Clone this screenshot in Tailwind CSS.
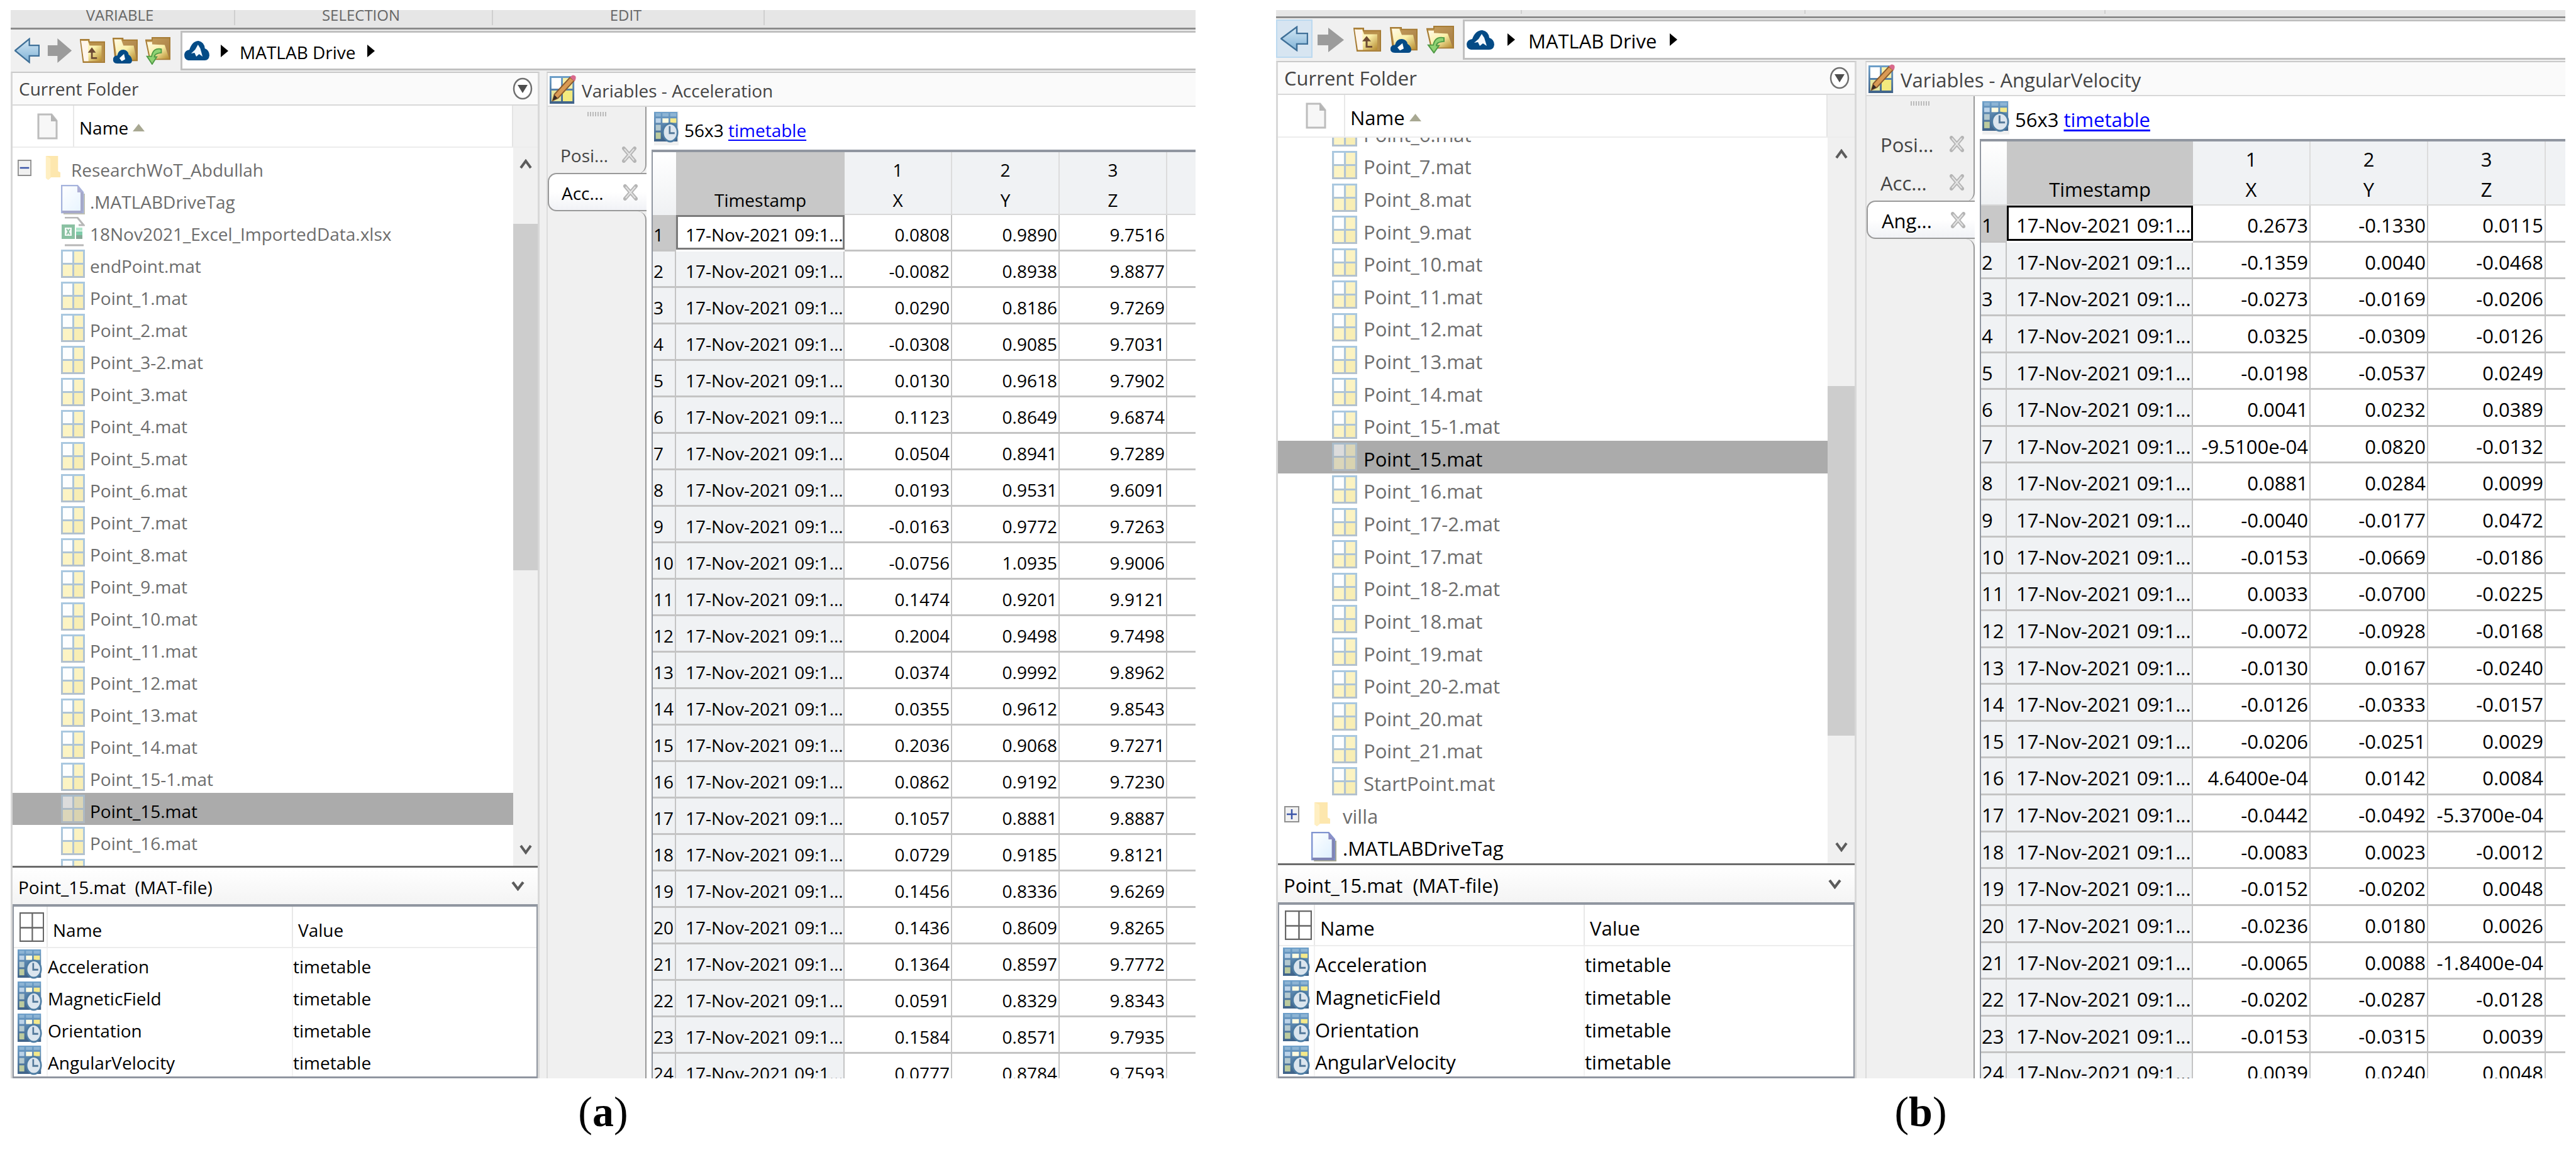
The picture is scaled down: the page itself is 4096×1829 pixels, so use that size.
<!DOCTYPE html>
<html lang="en">
<head>
<meta charset="utf-8">
<title>MATLAB Drive workspace</title>
<script src="https://cdn.jsdelivr.net/npm/@tailwindcss/browser@4"></script>
</head>
<body class="bg-white text-black">
<svg class="absolute h-0 w-0" aria-hidden="true">
  <defs>
    <linearGradient id="gBlue" x1="0" y1="0" x2="0" y2="1"><stop offset="0" stop-color="#d5e8f5"/><stop offset="1" stop-color="#7fb2d6"/></linearGradient>
    <linearGradient id="gTan" x1="0" y1="0" x2="1" y2="1"><stop offset="0" stop-color="#fffbe8"/><stop offset=".5" stop-color="#faf0a8"/><stop offset="1" stop-color="#b5892e"/></linearGradient>
    <linearGradient id="gBack" x1="0" y1="0" x2="1" y2="1"><stop offset="0" stop-color="#c8a15c"/><stop offset="1" stop-color="#a37a45"/></linearGradient>
    <linearGradient id="gPage" x1="0" y1="0" x2="1" y2="1"><stop offset="0" stop-color="#ffffff"/><stop offset="1" stop-color="#dcefff"/></linearGradient>
    <linearGradient id="gGrid" x1="0" y1="0" x2="0" y2="1"><stop offset="0" stop-color="#a9c8e0"/><stop offset="1" stop-color="#b3c1cd"/></linearGradient>
    <linearGradient id="gCal" x1="0" y1="0" x2="0" y2="1"><stop offset="0" stop-color="#6ea0ca"/><stop offset="1" stop-color="#3f6288"/></linearGradient>
  </defs>
  <symbol id="back" viewBox="0 0 44 44" preserveAspectRatio="none"><path d="M1 22 26 2V13H43V31H26V42Z" fill="url(#gBlue)" stroke="#3f7098" stroke-width="2.5"/></symbol>
  <symbol id="fwd" viewBox="0 0 44 44" preserveAspectRatio="none"><path d="M43 22 18 1V13H1V31H18V43Z" fill="#9b9b9b"/></symbol>
  <symbol id="up" viewBox="0 0 44 42" preserveAspectRatio="none"><path d="M1 2H16V6H43V40H6Z" fill="#b9914c" stroke="#a67c35" stroke-width="2"/><path d="M3 5 14 4 17 12H38V38L8 38Z" fill="url(#gTan)"/><path d="M2 4 14 5 15 38H7Z" fill="#fff6ec"/><path d="M30 33H21V20" fill="none" stroke="#6d4a33" stroke-width="3"/><path d="M21 15 28 24H14Z" fill="#6d4a33"/></symbol>
  <symbol id="cloudfolder" viewBox="0 0 44 43" preserveAspectRatio="none"><path d="M1 1H18V4H43V38H5Z" fill="url(#gBack)" stroke="#a67c35" stroke-width="2"/><path d="M3 3H15L19 13H37L42 37H8Z" fill="url(#gTan)"/><path d="M8 43Q0 43 1 35Q2 30 8 30Q10 20 19 20Q27 21 28 28Q34 32 34 38Q34 43 29 43Z" fill="#044b86"/><path d="M12 34 20 27 22 36 16 39Z" fill="#fff"/></symbol>
  <symbol id="refresh" viewBox="0 0 44 46" preserveAspectRatio="none"><path d="M1 5H12V1H43V37H8Z" fill="url(#gBack)" stroke="#a67c35" stroke-width="2"/><path d="M3 8H12V12L34 13 42 36H9Z" fill="url(#gTan)"/><path d="M28 20Q14 17 11 32H3L12 45 20 33H16Q16 27 28 26Z" fill="#8fd273" stroke="#4f9a45" stroke-width="2"/></symbol>
  <symbol id="cloud" viewBox="0 0 44 31" preserveAspectRatio="none"><path d="M7 31Q0 30 0 22Q1 15 9 14Q14 0 25 0Q35 2 36 12Q44 15 44 23Q43 31 36 31Z" fill="#044b86"/><path d="M12 20 19 14 24 6 28 12 32 25 26 21 21 25 18 19Z" fill="#f5faff"/></symbol>
  <symbol id="folder" viewBox="0 0 26 40" preserveAspectRatio="none"><path d="M1 1H22V26L26 28V36H10L5 40 1 37Z" fill="#fde7ae"/><path d="M1 1 9 5V37L5 40 1 37Z" fill="#ffefc2"/></symbol>
  <symbol id="page" viewBox="0 0 38 47" preserveAspectRatio="none"><path d="M4 14H38V47H4Z" fill="#a7a78f"/><path d="M1 1H26L35 12V44H1Z" fill="url(#gPage)" stroke="#7f93d0" stroke-width="2.5"/><path d="M33 12V42M2 43H34" stroke="#7f84b4" stroke-width="4"/><path d="M26 1V12H35Z" fill="#8e8fc4"/></symbol>
  <symbol id="xlsx" viewBox="0 0 38 47" preserveAspectRatio="none"><path d="M6 1H26L36 13H28M6 45H36" fill="none" stroke="#999" stroke-width="3"/><path d="M1 12H22V35H1Z" fill="#5aa87c"/><path d="M24 17H34V22H24Z" fill="#90ddb7"/><path d="M24 23H34V29H24Z" fill="#49b787"/><path d="M24 29H34V35H24Z" fill="#53856a"/><path d="M6 17H17V30H6Z" fill="#f3f8f5"/><path d="M9 19 14 28M14 19 9 28" stroke="#5aa87c" stroke-width="2"/></symbol>
  <symbol id="mat" viewBox="0 0 38 45" preserveAspectRatio="none"><path d="M0 0H38V45H0Z" fill="url(#gGrid)"/><path d="M3 3H18V21H3Z" fill="#fdfefe"/><path d="M21 3H35V21H21Z" fill="#fbf3c2"/><path d="M3 24H18V42H3Z" fill="#fcf4c4"/><path d="M21 24H35V42H21Z" fill="#f8eeb4"/></symbol>
  <symbol id="timetable" viewBox="0 0 44 48" preserveAspectRatio="none"><path d="M0 0H42V46H0Z" fill="url(#gCal)"/><path d="M3 2H12V7H3ZM15 2H26V7H15ZM29 2H40V7H29Z" fill="#8db4d4"/><path d="M3 10H12V17H3Z" fill="#bcd3e8"/><path d="M15 10H26V17H15Z" fill="#fffbe0"/><path d="M29 10H40V17H29Z" fill="#f4e98a"/><path d="M3 20H12V29H3Z" fill="#b4c9cf"/><path d="M3 32H12V42H3Z" fill="#bccb9e"/><ellipse cx="29" cy="32" rx="13" ry="14" fill="#dbe5ee" stroke="#4d7ca3" stroke-width="3"/><path d="M28 22V33H37" fill="none" stroke="#54799a" stroke-width="3"/></symbol>
  <symbol id="vars" viewBox="0 0 44 46" preserveAspectRatio="none"><path d="M0 2H41V46H0Z" fill="url(#gCal)"/><path d="M3 5H19V22H3Z" fill="#fff"/><path d="M22 5H38V22H22Z" fill="#f6f0a8"/><path d="M3 25H19V42H3Z" fill="#e5e69e"/><path d="M22 25H38V42H22Z" fill="#f3ea7e"/><path d="M5 41 8 31 34 4 41 9 14 37Z" fill="#d99a54" stroke="#8a5a2c" stroke-width="2"/><path d="M5 41 8 32 13 37Z" fill="#332a26"/><path d="M34 4Q38-2 43 2Q45 7 41 10Z" fill="#d9698c"/></symbol>
  <symbol id="blank" viewBox="0 0 33 42" preserveAspectRatio="none"><path d="M2 2H23L31 12V40H2Z" fill="#f7f7f7" stroke="#bdbdbd" stroke-width="3"/><path d="M22 1V13H32Z" fill="#b5b5b5"/></symbol>
  <symbol id="grid" viewBox="0 0 44 48" preserveAspectRatio="none"><path d="M1 1H43V47H1ZM23 1V47M1 25H43" fill="#fff" stroke="#666" stroke-width="2.5"/></symbol>
  <symbol id="minus" viewBox="0 0 24 26" preserveAspectRatio="none"><path d="M1 1H23V25H1Z" fill="#f1f1f1" stroke="#8f8f8f" stroke-width="2"/><path d="M4 13H20" stroke="#3b55a8" stroke-width="2.5"/></symbol>
  <symbol id="plus" viewBox="0 0 24 26" preserveAspectRatio="none"><path d="M1 1H23V25H1Z" fill="#f1f1f1" stroke="#8f8f8f" stroke-width="2"/><path d="M4 13H20M12 5V21" stroke="#3b55a8" stroke-width="2.5"/></symbol>
  <symbol id="menu" viewBox="0 0 32 36" preserveAspectRatio="none"><ellipse cx="16" cy="18" rx="14" ry="16" fill="#fff" stroke="#707070" stroke-width="2.5"/><path d="M8 12H24L16 25Z" fill="#4d4d4d"/></symbol>
  <symbol id="chevup" viewBox="0 0 20 16" preserveAspectRatio="none"><path d="M2 14 10 3 18 14" fill="none" stroke="#5c5c5c" stroke-width="4"/></symbol>
  <symbol id="chevdown" viewBox="0 0 20 16" preserveAspectRatio="none"><path d="M2 2 10 13 18 2" fill="none" stroke="#5c5c5c" stroke-width="4"/></symbol>
  <symbol id="tri" viewBox="0 0 12 20" preserveAspectRatio="none"><path d="M0 0 12 10 0 20Z" fill="#000"/></symbol>
  <symbol id="sort" viewBox="0 0 20 12" preserveAspectRatio="none"><path d="M0 12 10 0 20 12Z" fill="#a8a892"/></symbol>
  <symbol id="close" viewBox="0 0 24 26" preserveAspectRatio="none"><path d="M3 3 21 23M21 3 3 23" stroke="#b5b5b5" stroke-width="6" stroke-linecap="round"/><path d="M4 4 20 22M20 4 4 22" stroke="#e4e4e4" stroke-width="2"/></symbol>
</svg>

<main id="app" class="grid grid-cols-[1884fr_2050fr] gap-x-32 px-[17px] pt-4 font-['Open_Sans','Noto_Sans',sans-serif]"></main>

<script>
const icon = (id, cls) => `<svg class="shrink-0 ${cls}" aria-hidden="true"><use href="#${id}"/></svg>`;

const figures = [
  {
    caption: 'a', text: 'text-[28px]', variable: 'Acceleration',
    ribbon: [['VARIABLE', 'w-[357px] pr-[8px]'], ['SELECTION', 'w-[410px] pr-[8px]'], ['EDIT', 'w-[432px] pr-[8px]']],
    ribbonBox: 'h-[28px]', ribbonCell: 'h-[24px]', bar: 'h-[65px] pb-[2px]', tools: 'w-[270px] gap-x-[12px] pl-[6px]',
    tool: 'w-[40px]', backBox: 'w-[40px]', field: 'gap-x-[12px] pl-[3px]', tri: 'mx-[6px]',
    folder: 'w-[841px]', nameHead: 'h-[67px]', nameIcon: 'w-[98px] pl-[15px]', scroll: 'w-[39px]', scrollTop: 'top-[121px] h-[551px]',
    list: 'mt-[6px] auto-rows-[51px]', tree: 'pl-[8px]', box: 'w-[22px] mr-[22px]', fold: 'w-[24px] mr-[17px]', child: 'pl-[77px]', leaf: 'w-[38px] mr-[8px]', root: 'pl-[66px]',
    preview: 'h-[61px]', pgrid: 'grid grid-cols-[54px_390px_1fr]', pbody: 'h-[204px]', pIcon: 'w-[39px]',
    gap: 'w-[11px]', tabs: 'w-[157px]', tabTop: 'h-[106px]', posTop: 'pl-[20px] pr-[14px]',
    grid: 'grid grid-cols-[37px_268px_171px_171px_171px_1fr]', head: 'h-[100px]', tbody: 'h-[1392px]', sel: 'border-[#7a7a7a]',
    tabNames: ['Posi...', 'Acc...'],
    files: [['dir', 'ResearchWoT_Abdullah', 'minus'], ['page', '.MATLABDriveTag'], ['xlsx', '18Nov2021_Excel_ImportedData.xlsx'],
      ...'endPoint Point_1 Point_2 Point_3-2 Point_3 Point_4 Point_5 Point_6 Point_7 Point_8 Point_9 Point_10 Point_11 Point_12 Point_13 Point_14 Point_15-1 Point_15 Point_16'.split(' ').map(n => ['mat', n + '.mat']), ['mat', '']],
    data: `0.0808 0.9890 9.7516|-0.0082 0.8938 9.8877|0.0290 0.8186 9.7269|-0.0308 0.9085 9.7031|0.0130 0.9618 9.7902|0.1123 0.8649 9.6874|0.0504 0.8941 9.7289|0.0193 0.9531 9.6091|-0.0163 0.9772 9.7263|-0.0756 1.0935 9.9006|0.1474 0.9201 9.9121|0.2004 0.9498 9.7498|0.0374 0.9992 9.8962|0.0355 0.9612 9.8543|0.2036 0.9068 9.7271|0.0862 0.9192 9.7230|0.1057 0.8881 9.8887|0.0729 0.9185 9.8121|0.1456 0.8336 9.6269|0.1436 0.8609 9.8265|0.1364 0.8597 9.7772|0.0591 0.8329 9.8343|0.1584 0.8571 9.7935|0.0777 0.8784 9.7593`
  },
  {
    caption: 'b', text: 'text-[31px]', variable: 'AngularVelocity',
    ribbon: [['', 'w-[391px]'], ['', 'w-[451px]'], ['', 'w-[477px]']],
    ribbonBox: 'h-[10px]', ribbonCell: 'h-[6px]', bar: 'h-[66px] pb-[2px]', tools: 'w-[297px] gap-x-[14px]',
    tool: 'w-[44px]', backBox: 'w-[58px] h-[61px] self-start justify-center border-2 border-[#bbd9f0] bg-[#d7e5f1] -mr-[7px]', field: 'gap-x-[13px] pl-[3px]', tri: 'mx-[8px]',
    folder: 'w-[923px]', nameHead: 'h-[68px]', nameIcon: 'w-[107px] pl-[15px]', scroll: 'w-[43px]', scrollTop: 'top-[395px] h-[556px]',
    list: '-mt-[34px] h-[1187px] auto-rows-fr', tree: 'pl-[10px]', box: 'w-[24px] mr-[23px]', fold: 'w-[26px] mr-[20px]', child: 'pl-[86px]', leaf: 'w-[40px] mr-[10px]', root: 'pl-[53px]',
    preview: 'h-[62px]', pgrid: 'grid grid-cols-[57px_429px_1fr]', pbody: 'h-[207px]', pIcon: 'w-[43px]',
    gap: 'w-[14px]', tabs: 'w-[172px]', tabTop: 'h-[167px]', posTop: 'pl-[22px] pr-[15px]',
    grid: 'grid grid-cols-[41px_296px_187px_187px_187px_1fr]', head: 'h-[102px]', tbody: 'h-[1407px]', sel: 'border-black',
    tabNames: ['Posi...', 'Acc...', 'Ang...'],
    files: [...'6 7 8 9 10 11 12 13 14 15-1 15 16 17-2 17 18-2 18 19 20-2 20 21'.split(' ').map(n => ['mat', `Point_${n}.mat`]),
      ['mat', 'StartPoint.mat'], ['dir', 'villa', 'plus'], ['root', '.MATLABDriveTag']],
    data: `0.2673 -0.1330 0.0115|-0.1359 0.0040 -0.0468|-0.0273 -0.0169 -0.0206|0.0325 -0.0309 -0.0126|-0.0198 -0.0537 0.0249|0.0041 0.0232 0.0389|-9.5100e-04 0.0820 -0.0132|0.0881 0.0284 0.0099|-0.0040 -0.0177 0.0472|-0.0153 -0.0669 -0.0186|0.0033 -0.0700 -0.0225|-0.0072 -0.0928 -0.0168|-0.0130 0.0167 -0.0240|-0.0126 -0.0333 -0.0157|-0.0206 -0.0251 0.0029|4.6400e-04 0.0142 0.0084|-0.0442 -0.0492 -5.3700e-04|-0.0083 0.0023 -0.0012|-0.0152 -0.0202 0.0048|-0.0236 0.0180 0.0026|-0.0065 0.0088 -1.8400e-04|-0.0202 -0.0287 -0.0128|-0.0153 -0.0315 0.0039|0.0039 0.0240 0.0048`
  }
];

function fileRow(f, [kind, name, sign]) {
  const label = `<span class="pt-[6px]">${name}</span>`;
  if (kind === 'dir') return `<li class="flex items-center ${f.tree} text-[#6d6d6d]"><button aria-label="Toggle ${name}">${icon(sign, `h-[26px] ${f.box}`)}</button>${icon('folder', `h-[39px] ${f.fold}`)}${label}</li>`;
  if (kind === 'root') return `<li class="flex items-center ${f.root}">${icon('page', `h-[47px] ${f.leaf}`)}${label}</li>`;
  const on = name === 'Point_15.mat';
  return `<li class="flex items-center ${f.child} ${on ? 'bg-[#ababab] text-black' : 'text-[#6d6d6d]'}">${icon(kind, `${kind === 'mat' ? 'h-[45px]' : 'h-[47px] opacity-70'} ${on ? 'opacity-60' : ''} ${f.leaf}`)}${label}</li>`;
}

function tab(f, name, active) {
  return `<div class="flex h-[61px] items-center justify-between ${f.posTop} ${active ? 'relative -mt-[1px] rounded-l-[14px] border-2 border-r-0 border-[#999] bg-linear-to-b from-white from-50% to-[#f1f2f6] text-black' : 'text-[#444]'}">
    <button class="pt-[3px]">${name}</button><button aria-label="Close ${name}">${icon('close', 'h-[26px] w-[23px]')}</button></div>`;
}

function figure(f) {
  const rows = f.data.split('|').map(r => r.split(' '));
  const last = f.tabNames.length - 1;
  return `<figure class="flex min-w-0 flex-col ${f.text}">
  <div class="flex h-[1699px] flex-col overflow-hidden whitespace-nowrap bg-[#f0f0f0] leading-[40px]">
    <div class="mb-[2px] box-content flex shrink-0 border-b-3 border-[#8c8c8c] bg-[#e6e6e6] text-[24px] text-[#666] ${f.ribbonBox}">
      ${f.ribbon.map(([t, w]) => `<div class="border-r-2 border-[#cfcfcf] text-center leading-[15px] ${f.ribbonCell} ${w}">${t}</div>`).join('')}
    </div>
    <div class="flex shrink-0 ${f.bar}">
      <div class="flex items-center ${f.tools}">
        <button aria-label="Back" class="flex items-center ${f.backBox}">${icon('back', `h-[41px] ${f.tool}`)}</button>
        <button aria-label="Forward">${icon('fwd', `h-[41px] ${f.tool}`)}</button>
        <button aria-label="Up one level">${icon('up', `h-[40px] ${f.tool}`)}</button>
        <button aria-label="Drive folder">${icon('cloudfolder', `h-[41px] ${f.tool}`)}</button>
        <button aria-label="Refresh folder">${icon('refresh', `h-[44px] ${f.tool}`)}</button>
      </div>
      <nav class="flex flex-1 items-center border-y-3 border-l-3 border-[#c0c0c0] bg-white ${f.field}">
        ${icon('cloud', `h-[31px] ${f.tool}`)}${icon('tri', `h-[20px] w-[12px] ${f.tri}`)}
        <button class="pt-[4px]">MATLAB Drive</button>${icon('tri', `h-[20px] w-[12px] ${f.tri}`)}
      </nav>
    </div>
    <div class="flex min-h-0 flex-1">
      <section class="flex shrink-0 flex-col border-x-3 border-t-2 border-[#c9c9c9] border-x-[#d8d8d8] ${f.folder}">
        <header class="flex h-[52px] shrink-0 items-center justify-between border-b-2 border-[#d8d8d8] bg-[#fafafa] pl-[10px] pr-[8px] text-[#444]">
          <h2>Current Folder</h2><button aria-label="Folder actions">${icon('menu', 'h-[36px] w-[32px]')}</button>
        </header>
        <div class="flex shrink-0 border-b-2 border-[#ececec] ${f.nameHead}">
          <div class="flex flex-1 items-center border-r-2 border-[#e4e4e4] bg-white">
            <div class="flex h-full items-center justify-center border-r-2 border-[#e8e8e8] ${f.nameIcon}">${icon('blank', 'h-[42px] w-[33px]')}</div>
            <button class="flex items-center gap-x-[7px] pl-[8px] pt-[5px]">Name${icon('sort', 'h-[12px] w-[19px]')}</button>
          </div>
          <div class="${f.scroll}"></div>
        </div>
        <div class="relative flex min-h-0 flex-1 overflow-hidden bg-white">
          <ul class="grid flex-1 content-start ${f.list}">${f.files.map(x => fileRow(f, x)).join('')}</ul>
          <div class="relative flex shrink-0 flex-col items-center justify-between bg-[#f0f0f0] py-[18px] ${f.scroll}">
            ${icon('chevup', 'h-[16px] w-[20px]')}${icon('chevdown', 'h-[16px] w-[20px]')}
            <div class="absolute inset-x-0 bg-[#cdcdcd] ${f.scrollTop}"></div>
          </div>
        </div>
        <header class="flex shrink-0 items-center justify-between border-t-3 border-[#6b6b6b] bg-linear-to-b from-white to-[#f4f4f4] pl-[9px] pr-[21px] ${f.preview}">
          <h3 class="whitespace-pre pt-[4px]">Point_15.mat  (MAT-file)</h3><button aria-label="Collapse details">${icon('chevdown', 'h-[16px] w-[21px]')}</button>
        </header>
        <table class="block shrink-0 border-2 border-t-4 border-b-3 border-[#9096a0] bg-white">
          <thead class="block"><tr class="h-[66px] border-b-2 border-[#ececec] text-left ${f.pgrid}">
            <th class="flex items-center border-r-2 border-[#e8e8e8] pl-[9px]" aria-label="Type">${icon('grid', `h-[47px] ${f.pIcon}`)}</th>
            <th class="border-r-2 border-[#e8e8e8] pl-[8px] pt-[17px] font-normal">Name</th><th class="pl-[8px] pt-[17px] font-normal">Value</th></tr></thead>
          <tbody class="grid auto-rows-fr ${f.pbody}">
            ${['Acceleration', 'MagneticField', 'Orientation', 'AngularVelocity'].map(n => `<tr class="${f.pgrid}">
              <td class="flex items-center border-r-2 border-[#f3f3f3] pl-[6px]">${icon('timetable', `h-[47px] ${f.pIcon}`)}</td>
              <td class="border-r-2 border-[#f3f3f3] pt-[9px]">${n}</td><td class="pt-[9px]">timetable</td></tr>`).join('')}
          </tbody>
        </table>
      </section>
      <div class="shrink-0 ${f.gap}"></div>
      <section class="flex min-w-0 flex-1 flex-col border-t-2 border-l-2 border-[#c9c9c9] border-l-[#dcdcdc]">
        <header class="flex h-[54px] shrink-0 items-center gap-x-[9px] border-b-2 border-[#d8d8d8] bg-[#fafafa] pl-[3px] text-[#444]">
          ${icon('vars', 'h-[46px] w-[42px]')}<h2 class="pt-[3px]">Variables - ${f.variable}</h2>
        </header>
        <div class="flex min-h-0 flex-1 bg-white">
          <div class="flex shrink-0 flex-col bg-[#f0f0f0] ${f.tabs}">
            <div class="flex flex-col rounded-br-[14px] border-r-2 border-[#999] ${f.tabTop}">
              <div class="flex h-[45px] shrink-0 justify-center gap-x-[2px] pt-[8px]">${'<i class="h-[7px] w-[2px] bg-[#bbb]"></i>'.repeat(8)}</div>
              ${f.tabNames.slice(0, last).map(n => tab(f, n, false)).join('')}
            </div>
            ${tab(f, f.tabNames[last], true)}
            <div class="flex-1 rounded-tr-[14px] border-r-2 border-[#999]"></div>
          </div>
          <div class="flex min-w-0 flex-1 flex-col pl-[8px]">
            <div class="flex h-[68px] shrink-0 items-center gap-x-[9px] pl-[4px]">
              <span class="flex bg-[#f0f0f0] pb-[4px] pt-[1px]">${icon('timetable', `h-[49px] ${f.pIcon}`)}</span>
              <span class="pt-[5px]">56x3 <a href="#" class="text-[#0000ff] underline underline-offset-4">timetable</a></span>
            </div>
            <table class="block border-l-2 border-t-4 border-[#9096a0]">
              <thead class="block"><tr class="border-b-2 border-[#d9d9d9] bg-[#f0f2f4] ${f.grid} ${f.head}">
                <th class="bg-linear-to-b from-white to-[#eff1f3]" aria-label="Row"></th>
                <th class="bg-[#c8c8c8] pt-[52px] font-normal leading-[48px]">Timestamp</th>
                ${['X', 'Y', 'Z'].map((n, i) => `<th class="border-r-2 border-[#dcdcdc] pt-[4px] font-normal leading-[48px]">${i + 1}<br>${n}</th>`).join('')}
                <th aria-label="Empty"></th></tr></thead>
              <tbody class="grid auto-rows-fr ${f.tbody}">
                ${rows.map((r, i) => `<tr class="${f.grid}">
                  <th class="border-r-2 border-b-3 border-[#c4c4c4] pl-[1px] pt-[11px] text-left font-normal ${i ? 'bg-[#f0f2f4]' : 'bg-[#c8c8c8]'}">${i + 1}</th>
                  <td class="${i ? 'border-r-2 border-b-3 border-[#c4c4c4] bg-[#f0f2f4] pl-[15px] pt-[11px]' : `mb-[3px] border-3 bg-white pl-[12px] pt-[8px] ${f.sel}`}">17-Nov-2021 09:1...</td>
                  ${r.map(v => `<td class="border-r-2 border-b-3 border-[#c4c4c4] pr-[2px] pt-[11px] text-right">${v}</td>`).join('')}
                  <td class="border-b-3 border-[#c4c4c4]"></td></tr>`).join('')}
              </tbody>
            </table>
          </div>
        </div>
      </section>
    </div>
  </div>
  <figcaption class="pt-[15px] text-center font-['Liberation_Serif',serif] text-[68px] leading-[76px]">(<b>${f.caption}</b>)</figcaption>
</figure>`;
}

document.getElementById('app').innerHTML = figures.map(figure).join('');
</script>
</body>
</html>
